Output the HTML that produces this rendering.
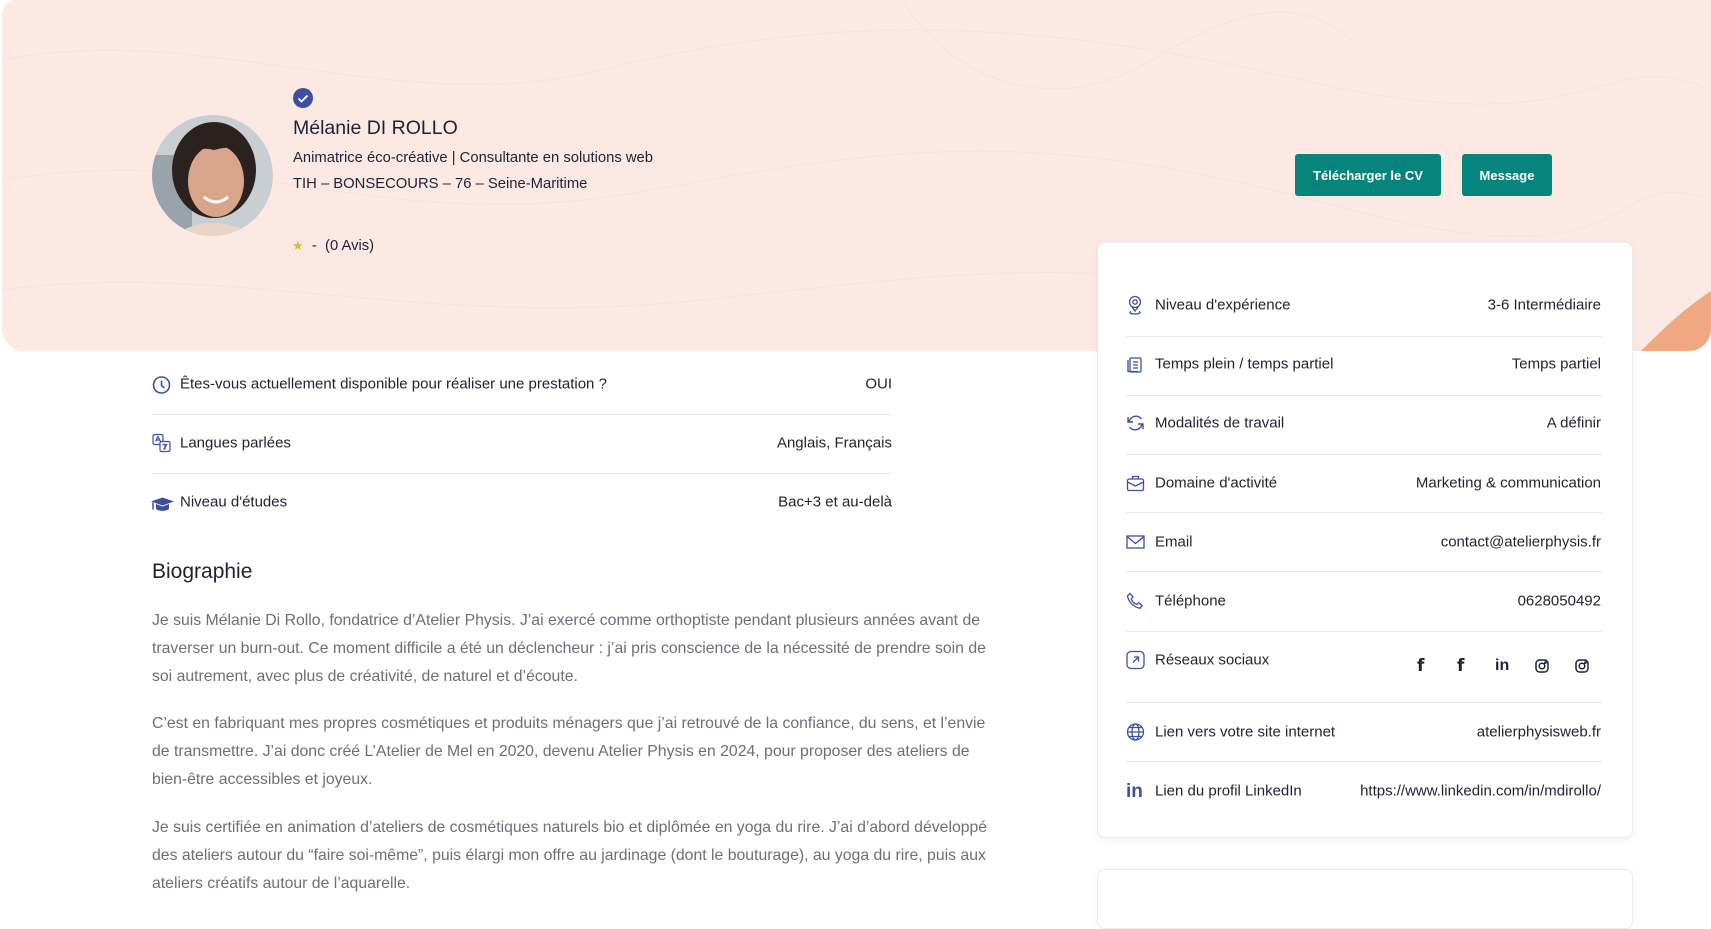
<!DOCTYPE html>
<html><head><meta charset="utf-8"><style>
*{margin:0;padding:0;box-sizing:border-box}
body{width:1711px;height:898px;overflow:hidden;background:#fff;font-family:"Liberation Sans",sans-serif;color:#1f2233;position:relative}
.banner{position:absolute;left:2px;top:0;width:1709px;height:351px;background:#fde9e3;border-radius:14px 0 22px 22px;overflow:hidden}
.abs{position:absolute;white-space:nowrap}
.btn{position:absolute;top:154px;height:42px;background:#07847c;color:#fff;font-weight:bold;font-size:13px;display:flex;align-items:center;justify-content:center;border-radius:3px}
.card{position:absolute;left:1097px;width:536px;background:#fff;border:1px solid #ececec;border-radius:8px;box-shadow:0 2px 8px rgba(0,0,0,.05)}
.sep{position:absolute;height:1px;background:#e6e6e6}
.lbl{position:absolute;font-size:15px;white-space:nowrap;transform:translateY(-50%)}
.val{position:absolute;font-size:15px;white-space:nowrap;transform:translateY(-50%);text-align:right}
.ic{position:absolute;transform:translateY(-50%)}
.bio{position:absolute;left:152px;font-size:15.8px;color:#6e6e78;line-height:28px;white-space:nowrap}
</style></head><body>
<div class="banner">
<svg width="1709" height="351" style="position:absolute;left:0;top:0" fill="none" stroke="#f9e0d8" stroke-width="1">
<path d="M0 60 C200 20 400 120 600 70 S1000 10 1300 80 1600 40 1709 90"/>
<path d="M0 180 C250 140 380 240 650 190 S1050 130 1350 210 1600 160 1709 200"/>
<path d="M0 290 C220 260 420 330 700 300 S1100 250 1400 320"/>
<path d="M900 0 C950 80 1050 120 1150 60 S1300 0 1350 40"/>
</svg>
<svg width="70" height="60" style="position:absolute;right:0;bottom:0"><path d="M0 60 C20 40 40 20 70 0 L70 60 Z" fill="#f0a882"/></svg>
</div>

<svg class="abs" style="left:152px;top:115px" width="121" height="121"><defs><clipPath id="c"><circle cx="60.5" cy="60.5" r="60.5"/></clipPath></defs>
<g clip-path="url(#c)"><rect width="121" height="121" fill="#c9ced2"/><rect x="0" y="40" width="40" height="81" fill="#9aa3aa"/>
<ellipse cx="62" cy="55" rx="42" ry="48" fill="#2b2220"/><ellipse cx="64" cy="66" rx="28" ry="36" fill="#d9a58a"/>
<path d="M30 30 Q62 5 95 35 Q80 30 62 35 Q45 30 30 45Z" fill="#2b2220"/><path d="M20 121 Q60 95 105 121Z" fill="#e8d5c8"/>
<path d="M52 82 Q64 92 76 82" stroke="#fff" stroke-width="3" fill="none"/></g></svg>

<svg class="abs" style="left:293px;top:88px" width="20" height="20"><circle cx="10" cy="10" r="10" fill="#3d4fa3"/><path d="M5.5 10.5l3 3 6-6" stroke="#fff" stroke-width="1.8" fill="none"/></svg>
<div class="abs" style="left:293px;top:117px;font-size:19.5px">Mélanie DI ROLLO</div>
<div class="abs" style="left:293px;top:150px;font-size:14.8px">Animatrice éco-créative | Consultante en solutions web</div>
<div class="abs" style="left:293px;top:176px;font-size:14.8px">TIH – BONSECOURS – 76 – Seine-Maritime</div>
<div class="abs" style="left:292px;top:238px;font-size:14.8px"><span style="color:#e9b730;font-size:13px">★</span>&nbsp; -&nbsp; (0 Avis)</div>

<div class="btn" style="left:1295px;width:146px">Télécharger le CV</div>
<div class="btn" style="left:1462px;width:90px">Message</div>

<div class="card" style="top:242px;height:596px"></div>
<div class="card" style="top:869px;height:60px"></div>

<div class="sep" style="left:1126px;width:476px;top:336px"></div>
<div class="sep" style="left:1126px;width:476px;top:395px"></div>
<div class="sep" style="left:1126px;width:476px;top:454px"></div>
<div class="sep" style="left:1126px;width:476px;top:512px"></div>
<div class="sep" style="left:1126px;width:476px;top:571px"></div>
<div class="sep" style="left:1126px;width:476px;top:631px"></div>
<div class="sep" style="left:1126px;width:476px;top:702px"></div>
<div class="sep" style="left:1126px;width:476px;top:761px"></div>

<svg class="ic" style="left:1126px;top:305px" width="18" height="20" fill="none" stroke="#3f4fa0" stroke-width="1.3"><circle cx="9" cy="7" r="5.5"/><circle cx="9" cy="7" r="2.2"/><path d="M6 12l3 4 3-4M5 16.5c-2 .7-1.5 2.5 4 2.5s6-1.8 4-2.5"/></svg>
<div class="lbl" style="left:1155px;top:305px">Niveau d'expérience</div><div class="val" style="right:110px;top:305px">3-6 Intermédiaire</div>

<svg class="ic" style="left:1126px;top:364px" width="18" height="18" fill="none" stroke="#3f4fa0" stroke-width="1.3"><rect x="4" y="3" width="11" height="14" rx="1"/><path d="M2 5v11.5h10M7 7h5M7 10h5M7 13h5"/></svg>
<div class="lbl" style="left:1155px;top:364px">Temps plein / temps partiel</div><div class="val" style="right:110px;top:364px">Temps partiel</div>

<svg class="ic" style="left:1126px;top:423px" width="19" height="18" fill="none" stroke="#3f4fa0" stroke-width="1.4"><path d="M3 8a7 7 0 0 1 12.5-3M16 10a7 7 0 0 1-12.5 3M2 3v5h5M17 15v-5h-5"/></svg>
<div class="lbl" style="left:1155px;top:423px">Modalités de travail</div><div class="val" style="right:110px;top:423px">A définir</div>

<svg class="ic" style="left:1126px;top:483px" width="19" height="18" fill="none" stroke="#3f4fa0" stroke-width="1.3"><rect x="1.5" y="5" width="16" height="11.5" rx="1.5"/><path d="M6.5 5V2.5h6V5M1.5 8l8 4 8-4"/></svg>
<div class="lbl" style="left:1155px;top:483px">Domaine d'activité</div><div class="val" style="right:110px;top:483px">Marketing &amp; communication</div>

<svg class="ic" style="left:1126px;top:542px" width="19" height="15" fill="none" stroke="#3f4fa0" stroke-width="1.3"><rect x="1" y="1.5" width="17" height="12"/><path d="M1 2l8.5 7 8.5-7"/></svg>
<div class="lbl" style="left:1155px;top:542px">Email</div><div class="val" style="right:110px;top:542px">contact@atelierphysis.fr</div>

<svg class="ic" style="left:1126px;top:601px" width="18" height="18" fill="none" stroke="#3f4fa0" stroke-width="1.3"><path d="M4 1.5l3 3.5-1.8 2c1 2.5 3 4.5 5.5 5.5l2-1.8 3.5 3-2 2.5C8 15.5 2.5 10 1.5 4z"/></svg>
<div class="lbl" style="left:1155px;top:601px">Téléphone</div><div class="val" style="right:110px;top:601px">0628050492</div>

<svg class="ic" style="left:1126px;top:660px" width="19" height="19" fill="none" stroke="#3f4fa0" stroke-width="1.3"><rect x="1" y="1" width="17" height="17" rx="4"/><path d="M7 12l5.5-5.5M8 6.5h4.5V11"/></svg>
<div class="lbl" style="left:1155px;top:660px">Réseaux sociaux</div>
<div class="val" style="left:1417px;top:666px;font-weight:bold;font-size:17px;font-family:'DejaVu Sans',sans-serif">f</div>
<div class="val" style="left:1457px;top:666px;font-weight:bold;font-size:17px;font-family:'DejaVu Sans',sans-serif">f</div>
<div class="val" style="left:1495px;top:666px;font-weight:bold;font-size:16px">in</div>
<svg class="ic" style="left:1535px;top:666px" width="14" height="14" fill="none" stroke="#1f2233" stroke-width="1.5"><rect x="1" y="1" width="12" height="12" rx="3.5"/><circle cx="7" cy="7" r="2.8"/><circle cx="10.4" cy="3.6" r=".6" fill="#1f2233"/></svg>
<svg class="ic" style="left:1575px;top:666px" width="14" height="14" fill="none" stroke="#1f2233" stroke-width="1.5"><rect x="1" y="1" width="12" height="12" rx="3.5"/><circle cx="7" cy="7" r="2.8"/><circle cx="10.4" cy="3.6" r=".6" fill="#1f2233"/></svg>

<svg class="ic" style="left:1126px;top:732px" width="19" height="19" fill="none" stroke="#3f4fa0" stroke-width="1.3"><circle cx="9.5" cy="9.5" r="8"/><ellipse cx="9.5" cy="9.5" rx="3.5" ry="8"/><path d="M1.5 9.5h16M3 5h13M3 14h13"/></svg>
<div class="lbl" style="left:1155px;top:732px">Lien vers votre site internet</div><div class="val" style="right:110px;top:732px">atelierphysisweb.fr</div>

<div class="lbl" style="left:1126px;top:792px;font-weight:bold;font-size:19px;color:#3f4fa0">in</div>
<div class="lbl" style="left:1155px;top:791px">Lien du profil LinkedIn</div><div class="val" style="right:110px;top:791px">https://www.linkedin.com/in/mdirollo/</div>

<div class="sep" style="left:152px;width:740px;top:414px"></div>
<div class="sep" style="left:152px;width:740px;top:473px"></div>
<svg class="ic" style="left:152px;top:385px" width="19" height="19" fill="none" stroke="#3f4fa0" stroke-width="1.6"><circle cx="9.5" cy="9.5" r="8"/><path d="M9.5 5v5l3 2.5"/></svg>
<div class="lbl" style="left:180px;top:384px">Êtes-vous actuellement disponible pour réaliser une prestation ?</div><div class="val" style="right:819px;top:384px">OUI</div>
<svg class="ic" style="left:152px;top:443px" width="20" height="19" fill="none" stroke="#3f4fa0" stroke-width="1.2"><rect x="1" y="1" width="10" height="10" rx="1.5"/><rect x="8" y="8" width="10" height="10" rx="1.5" fill="#fff"/><path d="M3.5 8l2.5-5 2.5 5M4.5 6.5h3M10.5 11h5M13 11v5M11.5 16l3-4"/></svg>
<div class="lbl" style="left:180px;top:443px">Langues parlées</div><div class="val" style="right:819px;top:443px">Anglais, Français</div>
<svg class="ic" style="left:151px;top:505px" width="23" height="17"><path d="M0 5l11.5-4 11.5 4-11.5 4z" fill="#3f4fa0"/><path d="M5 7.5v5c3 2.5 10 2.5 13 0v-5l-6.5 2.5z" fill="#3f4fa0"/><path d="M2 6v7" stroke="#3f4fa0" stroke-width="1.5"/></svg>
<div class="lbl" style="left:180px;top:502px">Niveau d'études</div><div class="val" style="right:819px;top:502px">Bac+3 et au-delà</div>

<div class="abs" style="left:152px;top:560px;font-size:21px">Biographie</div>
<div class="bio" style="top:607px">Je suis Mélanie Di Rollo, fondatrice d’Atelier Physis. J’ai exercé comme orthoptiste pendant plusieurs années avant de<br>traverser un burn-out. Ce moment difficile a été un déclencheur : j’ai pris conscience de la nécessité de prendre soin de<br>soi autrement, avec plus de créativité, de naturel et d’écoute.</div>
<div class="bio" style="top:710px">C’est en fabriquant mes propres cosmétiques et produits ménagers que j’ai retrouvé de la confiance, du sens, et l’envie<br>de transmettre. J’ai donc créé L’Atelier de Mel en 2020, devenu Atelier Physis en 2024, pour proposer des ateliers de<br>bien-être accessibles et joyeux.</div>
<div class="bio" style="top:814px">Je suis certifiée en animation d’ateliers de cosmétiques naturels bio et diplômée en yoga du rire. J’ai d’abord développé<br>des ateliers autour du “faire soi-même”, puis élargi mon offre au jardinage (dont le bouturage), au yoga du rire, puis aux<br>ateliers créatifs autour de l’aquarelle.</div>
</body></html>
